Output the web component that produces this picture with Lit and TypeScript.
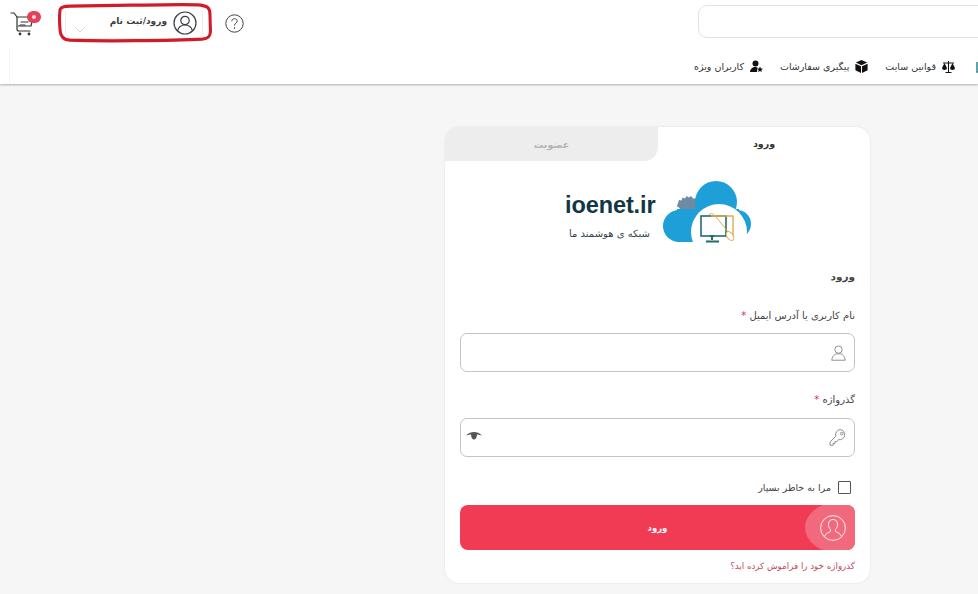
import { LitElement, html, css, svg } from "lit";
import { customElement } from "lit/decorators.js";

@customElement("app-root")
export class AppRoot extends LitElement {
  static styles = css`
    :host { display: block; width: 978px; height: 594px; overflow: hidden; background: #f6f6f6; position: relative; font-family: "DejaVu Sans", sans-serif; color: #333; }
    * { box-sizing: border-box; }
    svg { display: block; flex: none; }
    header { height: 84px; background: #fff; box-shadow: 0 1px 2px rgba(0,0,0,.3); }
    .top { height: 47px; display: flex; align-items: flex-start; padding-left: 10px; overflow: hidden; }
    .cart { position: relative; width: 32px; margin-top: 10px; flex: none; }
    .badge { position: absolute; left: 17px; top: 1px; width: 14px; height: 12px; border-radius: 6px; background: #e4405a; display: flex; align-items: center; justify-content: center; }
    .badge i { width: 4px; height: 4px; border-radius: 50%; background: #fbdde2; }
    .user { flex: none; margin: 11px 0 0 23px; width: 138px; height: 28px; border: 1px solid #ececec; border-top: 0; border-radius: 0 0 6px 6px; display: flex; align-items: center; justify-content: space-between; padding: 0 5px 0 8px; }
    .user .r { display: flex; align-items: center; gap: 6px; margin-top: -4px; }
    .user span { font-size: 9px; font-weight: 700; color: #3c3c3c; position: relative; top: -2px; }
    .chev { margin-top: 10px; }
    .help { margin: 14px 0 0 22px; }
    .search { margin: 5px 0 0 454px; width: 300px; height: 33px; flex: none; border: 1px solid #e2e2e2; border-radius: 9px; background: #fff; }
    nav { height: 37px; display: flex; align-items: center; padding: 0 0 0 684px; gap: 17px; white-space: nowrap; overflow: hidden; margin-left: 9px; border-left: 1px solid #f3f3f3; }
    .nv { display: flex; align-items: center; gap: 6px; font-size: 9.5px; color: #333; flex: none; position: relative; top: 1px; }
    .nv.cut { margin-left: 4px; }
    .card { position: absolute; left: 445px; top: 127px; width: 425px; height: 456px; background: #fff; border-radius: 14px; box-shadow: 0 0 2px rgba(0,0,0,.12); overflow: hidden; }
    .tabs { display: flex; height: 34px; }
    .tab { flex: 1; display: flex; align-items: center; justify-content: center; font-size: 9.5px; font-weight: 700; }
    .tab.off { background: #ededed; color: #b4b4b4; border-bottom-right-radius: 14px; flex: none; width: 213px; }
    .tab.on { color: #333; padding-bottom: 2px; }
    .logo { display: flex; align-items: flex-start; margin: 20px 0 0 120px; height: 63px; }
    .brand { width: 98px; padding-top: 11px; display: flex; flex-direction: column; }
    .brand b { font: 700 23.5px/26px "Liberation Sans", sans-serif; color: #123645; letter-spacing: -.1px; }
    .brand span { font-size: 10px; color: #2f4550; margin-top: 10px; direction: rtl; text-align: left; padding-left: 4px; }
    form { padding: 0 15px; display: flex; flex-direction: column; align-items: stretch; }
    h2 { margin: 22px 0 0; font-size: 10.5px; line-height: 20px; font-weight: 700; color: #444; text-align: right; direction: rtl; }
    label { display: block; direction: rtl; font-size: 10px; line-height: 16px; color: #444; }
    label em { color: #d8314a; font-style: normal; }
    .l1 { margin-top: 22px; }
    .l2 { margin-top: 20px; }
    .input { height: 39px; margin-top: 9px; border: 1px solid #c4c4c4; border-radius: 7px; display: flex; align-items: center; justify-content: space-between; background: #fff; padding: 0 7px 0 5px; }
    .l2 + .input { margin-top: 10px; }
    .input.u { justify-content: flex-end; }
    .eye { margin-bottom: 4px; }
    .check { margin-top: 23px; height: 15px; display: flex; justify-content: flex-end; align-items: center; gap: 7px; font-size: 9.5px; color: #444; padding-right: 4px; }
    .check i { width: 13px; height: 13px; border: 1px solid #555; border-radius: 1px; display: block; }
    .btn { margin-top: 10px; height: 45px; background: #f13a54; border-radius: 8px; display: flex; align-items: center; justify-content: center; color: #fff; font-size: 8.5px; font-weight: 700; position: relative; overflow: hidden; }
    .btn .disc { position: absolute; right: -17px; top: -3px; width: 67px; height: 51px; border-radius: 50%; background: #f2687c; display: flex; align-items: center; justify-content: flex-start; padding-left: 15px; }
    .forgot { margin-top: 9px; font-size: 8.7px; line-height: 14px; color: #c2485c; direction: rtl; }
    .ring { position: absolute; left: 55px; top: 3px; width: 158px; height: 41px; pointer-events: none; }
  `;

  cartIcon() {
    return html`<svg width="26" height="26" viewBox="0 0 26 26" fill="none" stroke="#333" stroke-width="1.2" stroke-linecap="round" stroke-linejoin="round">
      <path d="M1 3h3l3 4v12q0 2 2 2h11"/><path d="M7 7h16l-2 9H8"/><path d="M11 12h7M10 15h5"/>
      <circle cx="10" cy="24" r=".8" fill="#333"/><circle cx="19" cy="24" r=".8" fill="#333"/></svg>`;
  }
  keyIcon() {
    return html`<svg width="18" height="19" viewBox="0 0 20 20" fill="none" stroke="#8a8a8a" stroke-width="1.1"><path d="M12.800 1.200a5.600 5.600 0 0 0-5.200 7.400L1.200 15v3.600h3.400v-2h2v-2h2l2.200-2.200a5.600 5.600 0 1 0 2-11.200z" stroke-linejoin="round"/><circle cx="14.200" cy="5.600" r="1.500"/></svg>`;
  }
  logo() {
    return svg`<svg width="90" height="63" viewBox="0 0 90 63">
      <path d="M15 22l1-3 2.500.5 1-3 2.500 1 1.500-2.500 2.500 1.500 2-1.500 2 2.500 3 0 1 12H18l-2-3-2-1z" fill="#6f8ba3"/>
      <circle cx="16" cy="45" r="16" fill="#1f9fd8"/>
      <circle cx="53" cy="21" r="21" fill="#1f9fd8"/>
      <circle cx="74" cy="43" r="14" fill="#1f9fd8"/>
      <rect x="14" y="28" width="62" height="33" fill="#1f9fd8"/>
      <circle cx="56" cy="51" r="28" fill="#fff"/>
      <rect x="38" y="35" width="25" height="20" fill="none" stroke="#1d6f6f" stroke-width="1.600"/>
      <path d="M47 55h4M49 56v3M43 60.500h13" stroke="#1d6f6f" stroke-width="2"/>
      <path d="M48 35h22v21h-4" fill="none" stroke="#e4a94f" stroke-width="1.400"/>
      <path d="M46 34c2-3 5-1 7 2l13 16" fill="none" stroke="#e4a94f" stroke-width="1"/>
      <ellipse cx="67" cy="55" rx="3" ry="5" transform="rotate(-35 67 55)" fill="#fff" stroke="#e4a94f" stroke-width="1"/>
    </svg>`;
  }

  render() {
    return html`
      <header>
        <div class="top">
          <div class="cart">${this.cartIcon()}<div class="badge"><i></i></div></div>
          <div class="user">
            <svg class="chev" width="12" height="7" viewBox="0 0 12 7" fill="none" stroke="#d8d8d8" stroke-width="1"><path d="M1 1l5 5 5-5"/></svg>
            <div class="r"><span>ورود/ثبت نام</span>
              <svg width="24" height="24" viewBox="0 0 24 24" fill="none" stroke="#3a3f47" stroke-width="1.2"><circle cx="12" cy="12" r="11"/><circle cx="12" cy="9.500" r="4.200"/><path d="M4.500 20c1-4 3.500-6 7.500-6s6.500 2 7.500 6"/></svg></div>
          </div>
          <svg class="help" width="19" height="19" viewBox="0 0 19 19" fill="none" stroke="#444" stroke-width="1"><circle cx="9.500" cy="9.500" r="8.700"/><path d="M6.800 7.300c0-1.600 1.200-2.600 2.700-2.600s2.700 1 2.700 2.400c0 2.100-2.700 2-2.700 4.400"/><circle cx="9.500" cy="14" r=".4" fill="#444"/></svg>
          <div class="search"></div>
        </div>
        <nav>
          <div class="nv"><span>کاربران ویژه</span>
            <svg width="13" height="13" viewBox="0 0 13 13" fill="#111"><circle cx="5.500" cy="3.500" r="3"/><path d="M0 12c0-3 2.500-5 5.500-5 1 0 1.500.2 2 .5L7 12z"/><path d="M10 6.500l.9 1.900 2 .2-1.500 1.400.4 2-1.800-1-1.800 1 .4-2L7.100 8.600l2-.2z"/></svg></div>
          <div class="nv"><span>پیگیری سفارشات</span>
            <svg width="13" height="13" viewBox="0 0 13 13" fill="#111"><path d="M6.500 0l5.700 2.600-5.700 2.700L.8 2.600z"/><path d="M.4 3.700l5.600 2.600V13L.4 10.300zM12.600 3.700L7 6.300V13l5.600-2.700z"/></svg></div>
          <div class="nv"><span>قوانین سایت</span>
            <svg width="13" height="12" viewBox="0 0 13 12" fill="none" stroke="#111" stroke-width="1"><path d="M6.500 0v11M3.500 11.500h6M1 2h11"/><path d="M0 7l2.500-5L5 7a2.500 2 0 0 1-5 0zM8 7l2.500-5L13 7a2.500 2 0 0 1-5 0z" fill="#111" stroke="none"/></svg></div>
          <div class="nv cut"><svg width="13" height="12" viewBox="0 0 13 12" fill="none" stroke="#1d7f8c" stroke-width="1.400"><path d="M1 1v10h11"/></svg></div>
        </nav>
      </header>

      <section class="card">
        <div class="tabs">
          <div class="tab off">عضویت</div>
          <div class="tab on">ورود</div>
        </div>
        <div class="logo">
          <div class="brand"><b>ioenet.ir</b><span>شبکه ی هوشمند ما</span></div>
          ${this.logo()}
        </div>
        <form>
          <h2>ورود</h2>
          <label class="l1">نام کاربری یا آدرس ایمیل <em>*</em></label>
          <div class="input u">
            <svg width="17" height="18" viewBox="0 0 20 20" fill="none" stroke="#8a8a8a" stroke-width="1.100"><circle cx="10" cy="6" r="4.300"/><path d="M2 18.500c.5-4 3-7 5.500-7.500h5c2.500.5 5 3.500 5.500 7.500z" stroke-linejoin="round"/></svg>
          </div>
          <label class="l2">گذرواژه <em>*</em></label>
          <div class="input">
            <svg class="eye" width="16" height="8" viewBox="0 0 16 8" fill="#555"><path d="M0 3.500C3 .5 5 0 8 0s5 .5 8 3.500C13 2.500 12 2.500 11 2.500c0 3-1.500 5-3 5s-3-2-3-5c-1 0-2 0-5 1z"/></svg>
            ${this.keyIcon()}
          </div>
          <div class="check"><span>مرا به خاطر بسپار</span><i></i></div>
          <div class="btn"><span>ورود</span>
            <div class="disc"><svg width="26" height="26" viewBox="0 0 26 26" fill="none" stroke="#fff" stroke-width="1" opacity=".9"><circle cx="13" cy="13" r="12.400"/><path d="M4.500 21.500c1-3.500 4-3.500 6-5v-2c-1.500-1.500-2-3-2-5.500 0-3 2-4.500 4.500-4.500s4.500 1.500 4.500 4.500c0 2.500-.5 4-2 5.500v2c2 1.500 5 1.500 6 5"/></svg></div>
          </div>
          <div class="forgot">گذرواژه خود را فراموش کرده اید؟</div>
        </form>
      </section>

      <svg class="ring" viewBox="0 0 155 38" preserveAspectRatio="none" fill="none" stroke="#d11a2a" stroke-width="3"><path d="M5 6c1-2 3-3 10-3l60-1c30 0 55-1 68 0 6 1 9 2 9 8l.5 16c0 5-2 7-8 7.500-30 1.500-100 2-130 1-6-.5-9-3-9.500-9C4.500 20 4 12 5 6z"/></svg>
    `;
  }
}
